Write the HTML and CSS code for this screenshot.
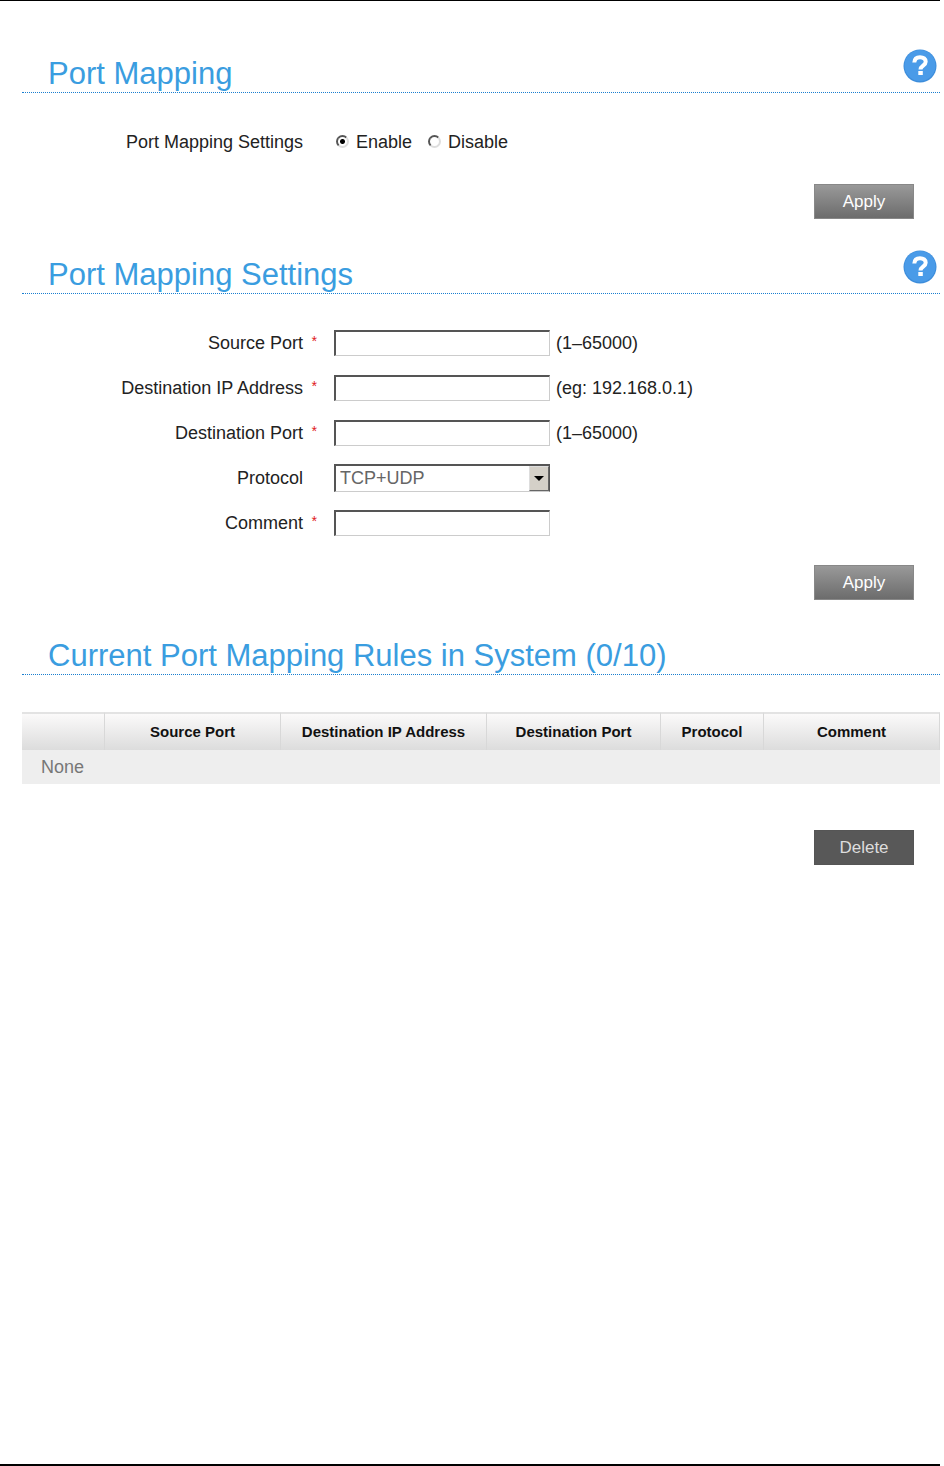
FILE: index.html
```html
<!DOCTYPE html>
<html lang="en">
<head>
  <meta charset="UTF-8" />
  <title>Port Mapping</title>
  <link rel="stylesheet" href="styles.css">
</head>
<body>

  <main>
    <!-- Enable / disable -->
    <section>
      <div class="section-head">
        <h1>Port Mapping</h1>
        <button class="help" type="button" aria-label="Help">
          <svg width="34" height="34" viewBox="0 0 34 34">
            <circle cx="17" cy="17" r="16.5" fill="#3d8ddb" />
            <circle cx="17" cy="16.5" r="15.5" fill="#4a9be8" />
            <path d="M11.300 13.500c.2-3.600 2.500-5.300 5.700-5.300 3.500 0 5.700 1.700 5.700 4.500 0 3.900-5.200 3.900-5.200 7.800" fill="none" stroke="#fff" stroke-width="4" />
            <rect x="15.300" y="22" width="4.500" height="4" fill="#fff" />
          </svg>
        </button>
      </div>
      <form class="settings">
        <div class="row" role="radiogroup" aria-labelledby="mappingLabel">
          <span class="label" id="mappingLabel">Port Mapping Settings</span>
          <span class="mark"></span>
          <div class="radios">
            <label><input type="radio" name="mapping" value="1" checked />Enable</label>
            <label><input type="radio" name="mapping" value="0" />Disable</label>
          </div>
        </div>
        <div class="actions"><button class="btn" type="button">Apply</button></div>
      </form>
    </section>

    <!-- New rule -->
    <section>
      <div class="section-head">
        <h1>Port Mapping Settings</h1>
        <button class="help" type="button" aria-label="Help">
          <svg width="34" height="34" viewBox="0 0 34 34">
            <circle cx="17" cy="17" r="16.5" fill="#3d8ddb" />
            <circle cx="17" cy="16.5" r="15.5" fill="#4a9be8" />
            <path d="M11.300 13.500c.2-3.600 2.500-5.300 5.700-5.300 3.500 0 5.700 1.700 5.700 4.500 0 3.900-5.200 3.900-5.200 7.800" fill="none" stroke="#fff" stroke-width="4" />
            <rect x="15.300" y="22" width="4.500" height="4" fill="#fff" />
          </svg>
        </button>
      </div>
      <form class="settings">
        <div class="row">
          <label class="label" for="sourcePort">Source Port</label>
          <span class="mark">*</span>
          <input class="field" type="text" id="sourcePort" />
          <span class="hint">(1–65000)</span>
        </div>
        <div class="row">
          <label class="label" for="destIp">Destination IP Address</label>
          <span class="mark">*</span>
          <input class="field" type="text" id="destIp" />
          <span class="hint">(eg: 192.168.0.1)</span>
        </div>
        <div class="row">
          <label class="label" for="destPort">Destination Port</label>
          <span class="mark">*</span>
          <input class="field" type="text" id="destPort" />
          <span class="hint">(1–65000)</span>
        </div>
        <div class="row">
          <label class="label" for="protocol">Protocol</label>
          <span class="mark"></span>
          <div class="select-wrap">
            <select id="protocol">
              <option>TCP+UDP</option>
              <option>TCP</option>
              <option>UDP</option>
            </select>
            <span class="arrow"></span>
          </div>
        </div>
        <div class="row">
          <label class="label" for="comment">Comment</label>
          <span class="mark">*</span>
          <input class="field" type="text" id="comment" />
        </div>
        <div class="actions"><button class="btn" type="button">Apply</button></div>
      </form>
    </section>

    <!-- Existing rules -->
    <section>
      <div class="section-head">
        <h1>Current Port Mapping Rules in System (0/10)</h1>
      </div>
      <table class="rules">
        <colgroup>
          <col class="col-check"><col class="col-source"><col class="col-ip">
          <col class="col-dest"><col class="col-protocol"><col>
        </colgroup>
        <thead>
          <tr>
            <th></th>
            <th>Source Port</th>
            <th>Destination IP Address</th>
            <th>Destination Port</th>
            <th>Protocol</th>
            <th>Comment</th>
          </tr>
        </thead>
        <tbody>
          <tr><td colspan="6">None</td></tr>
        </tbody>
      </table>
      <div class="actions"><button class="btn btn-dark" type="button">Delete</button></div>
    </section>
  </main>

</body>
</html>
```

FILE: styles.css
```css
* {
  box-sizing: border-box;
}

body {
  display: flex;
  flex-direction: column;
  min-height: 100vh;
  margin: 0;
  padding-right: 4px;
  background: #fff;
  color: #222;
  font-family: "Liberation Sans", Arial, sans-serif;
  font-size: 18px;
  line-height: 24px;
}

main {
  flex: 1;
  border-top: 1px solid #000;
  border-bottom: 2px solid #000;
  padding: 42px 0 40px 22px;
}

section {
  margin-bottom: 25px;
}

.section-head {
  display: flex;
  justify-content: space-between;
  align-items: flex-end;
  height: 50px;
  padding-left: 26px;
  border-bottom: 1px dotted #1a7fd0;
}

h1 {
  margin: 0;
  color: #3a9de0;
  font-size: 31px;
  font-weight: normal;
  line-height: 36px;
}

.help {
  height: 34px;
  margin: 0 3px 9px 0;
  padding: 0;
  border: none;
  background: none;
  cursor: pointer;
}

.help svg {
  display: block;
}

.settings {
  padding-top: 26px;
}

.row {
  display: flex;
  align-items: center;
  height: 45px;
}

.label {
  width: 281px;
  text-align: right;
}

.mark {
  width: 31px;
  padding: 0 0 3px 8px;
  color: #e02020;
  font-size: 14px;
  font-style: italic;
}

.field,
.select-wrap select {
  width: 216px;
  height: 26px;
  margin: 0;
  padding: 0 4px;
  border: 1px solid #ccc;
  border-top: 2px solid #555;
  border-left: 2px solid #555;
  border-radius: 0;
  background: #fff;
  color: #666;
  font: inherit;
}

.hint {
  margin-left: 6px;
}

.select-wrap {
  position: relative;
}

.select-wrap select {
  display: block;
  height: 28px;
  border-right: 1px solid #555;
  appearance: none;
}

/* grey drop-down button on top of the select */
.arrow {
  position: absolute;
  top: 2px;
  right: 1px;
  display: flex;
  align-items: center;
  justify-content: center;
  width: 20px;
  height: 25px;
  border: 1px solid #ddd;
  border-right-color: #666;
  border-bottom-color: #666;
  background: #d4d0c8;
  pointer-events: none;
}

.arrow::after {
  content: "";
  border: 5px solid transparent;
  border-top-color: #000;
  border-bottom: none;
}

.radios {
  display: flex;
  gap: 16px;
  padding-left: 2px;
}

.radios label {
  display: flex;
  align-items: center;
}

.radios input {
  width: 13px;
  height: 13px;
  margin: 0 7px 0 0;
  border: 2px solid #555;
  border-right-color: #ddd;
  border-bottom-color: #ddd;
  border-radius: 50%;
  appearance: none;
}

.radios input:checked {
  background: radial-gradient(circle, #000 0 2px, #fff 3px);
}

.actions {
  display: flex;
  justify-content: flex-end;
  padding: 20px 26px 0 0;
}

.btn {
  width: 100px;
  height: 35px;
  padding: 0;
  border: 1px solid #888;
  background: linear-gradient(#999, #6c6c6c);
  color: #fff;
  font-family: inherit;
  font-size: 17px;
  cursor: pointer;
}

.btn-dark {
  border-color: #555;
  background: #585858;
  color: #ddd;
}

.rules {
  width: 100%;
  margin: 37px 0 26px;
  border-collapse: separate;
  border-spacing: 0;
  table-layout: fixed;
}

.rules th {
  height: 38px;
  padding: 0;
  border-top: 2px solid #e3e3e3;
  border-right: 1px solid #d8d8d8;
  background: linear-gradient(#fbfafa, #dcdcdc);
  color: #111;
  font-size: 15px;
}

.rules td {
  height: 34px;
  padding: 0 19px;
  background: #eee;
  color: #777;
}

.col-check {
  width: 83px;
}

.col-source {
  width: 176px;
}

.col-ip {
  width: 206px;
}

.col-dest {
  width: 174px;
}

.col-protocol {
  width: 103px;
}
```
